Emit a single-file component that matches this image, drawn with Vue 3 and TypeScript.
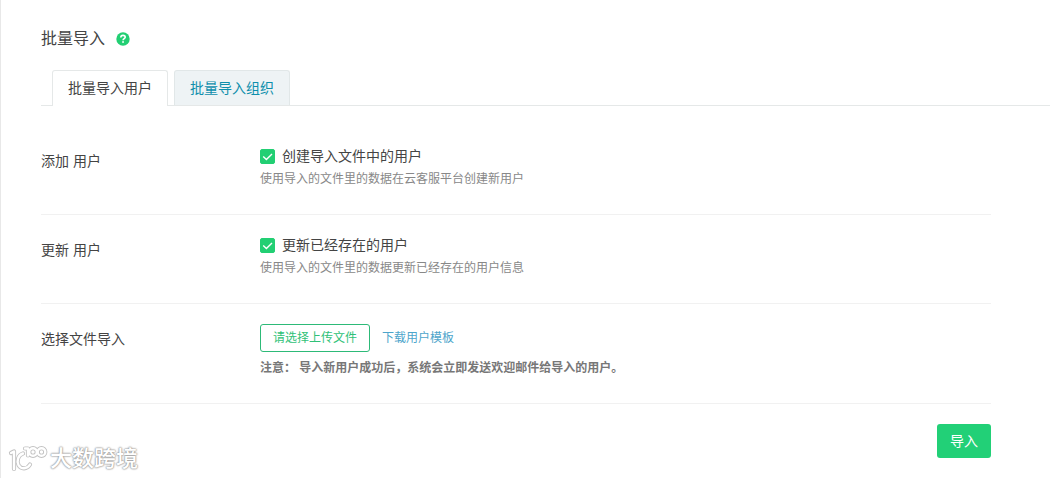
<script setup lang="ts">
import { ref } from 'vue'

interface Tab {
  id: string
  label: string
}

const tabs: Tab[] = [
  { id: 'users', label: '批量导入用户' },
  { id: 'orgs', label: '批量导入组织' },
]
const activeTab = ref('users')

const options = ref([
  {
    id: 'create',
    title: '添加 用户',
    label: '创建导入文件中的用户',
    hint: '使用导入的文件里的数据在云客服平台创建新用户',
    checked: true,
  },
  {
    id: 'update',
    title: '更新 用户',
    label: '更新已经存在的用户',
    hint: '使用导入的文件里的数据更新已经存在的用户信息',
    checked: true,
  },
])
</script>

<template>
  <main class="page">
    <header class="heading">
      <h1>批量导入</h1>
      <svg class="help" viewBox="0 0 14 14" aria-hidden="true">
        <circle cx="7" cy="7" r="6.7" fill="#22cf73" />
        <path d="M4.8 5.5C4.8 4.1 5.7 3.4 7 3.4S9.2 4.2 9.2 5.3C9.2 6.7 7.1 6.7 7.1 8.2" fill="none" stroke="#fff" stroke-width="1.6" />
        <rect x="6.2" y="9.2" width="1.7" height="1.6" fill="#fff" />
      </svg>
    </header>

    <nav class="tabs" role="tablist">
      <button
        v-for="tab in tabs"
        :key="tab.id"
        type="button"
        role="tab"
        class="tab"
        :class="{ active: activeTab === tab.id }"
        :aria-selected="activeTab === tab.id"
        @click="activeTab = tab.id"
      >{{ tab.label }}</button>
    </nav>

    <form class="form" @submit.prevent>
      <section v-for="option in options" :key="option.id" class="row">
        <div class="name">{{ option.title }}</div>
        <div class="body">
          <label class="check" :for="option.id">
            <input :id="option.id" v-model="option.checked" type="checkbox" class="native" />
            <svg class="tick" viewBox="0 0 15 15" aria-hidden="true">
              <path d="M3.2 7.4L6.4 10.5L12 4.9" fill="none" stroke="#fff" stroke-width="1.4" />
            </svg>
            <span>{{ option.label }}</span>
          </label>
          <p class="hint">{{ option.hint }}</p>
        </div>
      </section>

      <section class="row">
        <div class="name">选择文件导入</div>
        <div class="body">
          <div class="upload">
            <button type="button" class="choose">请选择上传文件</button>
            <a href="#" class="template">下载用户模板</a>
          </div>
          <p class="note">注意： 导入新用户成功后，系统会立即发送欢迎邮件给导入的用户。</p>
        </div>
      </section>

      <footer class="actions">
        <button type="submit" class="submit">导入</button>
      </footer>
    </form>

    <div class="watermark">
      <svg class="mark" viewBox="0 0 40 28" aria-hidden="true">
        <defs>
          <g id="mark-strokes">
            <path d="M3 8L6 6.500V24" />
            <path d="M15 8.500C10 10 8.500 16 10.500 20C13 24.500 19 24.500 22 19.500" />
            <path d="M17 3.500H20V10.500" />
            <circle cx="25" cy="7" r="3.800" />
            <circle cx="33.500" cy="7" r="3.800" />
          </g>
        </defs>
        <g fill="none" stroke-linecap="round" stroke-linejoin="round">
          <use href="#mark-strokes" stroke="#c2c2c2" stroke-width="4.2" />
          <use href="#mark-strokes" stroke="#fff" stroke-width="2.4" />
        </g>
      </svg>
      <span>大数跨境</span>
    </div>
  </main>
</template>

<style>
body {
  margin: 0;
  background: #fff;
}
</style>

<style scoped>
.page {
  position: relative;
  box-sizing: border-box;
  min-height: 100vh;
  padding: 28px 0 20px 40px;
  border-left: 1px solid #e8e8e8;
  background: #fff;
  color: #444;
  font: 14px/20px "Liberation Sans", "Noto Sans CJK SC", sans-serif;
}
button {
  margin: 0;
  font-family: inherit;
  cursor: pointer;
}
h1,
p {
  margin: 0;
}
.heading {
  display: flex;
  align-items: center;
  gap: 11px;
  height: 22px;
}
h1 {
  font-size: 16px;
  font-weight: 400;
  line-height: 22px;
}
.help {
  width: 14px;
  height: 14px;
}
.tabs {
  display: flex;
  gap: 6px;
  margin-top: 20px;
  padding-left: 11px;
  border-bottom: 1px solid #e5e8e8;
}
.tab {
  box-sizing: border-box;
  height: 35px;
  padding: 0 15px;
  border: 1px solid #e1e7e8;
  border-bottom: 0;
  border-radius: 3px 3px 0 0;
  background: #eef3f5;
  color: #0e8fac;
  font-size: 14px;
  line-height: 34px;
}
.tab.active {
  height: 36px;
  margin-bottom: -1px;
  padding-bottom: 1px;
  border-color: #e5e8e8;
  background: #fff;
  color: #444;
}
.form {
  margin: 20px 59px 0 0;
}
.row {
  display: flex;
  padding: 20px 0 25px;
  border-bottom: 1px solid #f1f1f1;
}
.name {
  flex: 0 0 219px;
  padding-top: 5px;
}
.body {
  flex: 1;
}
.check {
  position: relative;
  display: flex;
  align-items: center;
  width: fit-content;
}
.native {
  appearance: none;
  width: 15px;
  height: 15px;
  margin: 0 7px 0 0;
  border: 1px solid #22cf73;
  border-radius: 2px;
  background: #fff;
}
.native:checked {
  background: #22cf73;
}
.tick {
  position: absolute;
  left: 0;
  width: 15px;
  height: 15px;
  pointer-events: none;
}
.hint {
  margin-top: 3px;
  color: #888;
  font-size: 12px;
}
.upload {
  display: flex;
  align-items: center;
  gap: 12px;
}
.choose {
  box-sizing: border-box;
  height: 28px;
  padding: 0 12px;
  border: 1px solid #2dba78;
  border-radius: 3px;
  background: #fff;
  color: #2fc177;
  font-size: 12px;
  line-height: 26px;
}
.template {
  color: #4da5cb;
  font-size: 12px;
  text-decoration: none;
}
.note {
  margin-top: 6px;
  color: #777;
  font-size: 12px;
  font-weight: 700;
}
.actions {
  display: flex;
  justify-content: flex-end;
  padding-top: 20px;
}
.submit {
  height: 34px;
  padding: 0 13px;
  border: 0;
  border-radius: 3px;
  background: #22d077;
  color: #fff;
  font-size: 14px;
  line-height: 34px;
}
.watermark {
  position: absolute;
  bottom: 4px;
  left: 7px;
  display: flex;
  align-items: center;
  gap: 2px;
  color: #fff;
  font-size: 22px;
  font-weight: 500;
  line-height: 30px;
  text-shadow: 0 0 2px #999, 0 0 2px #999, 0 0 1px #aaa;
}
.mark {
  width: 40px;
  height: 28px;
}
</style>
